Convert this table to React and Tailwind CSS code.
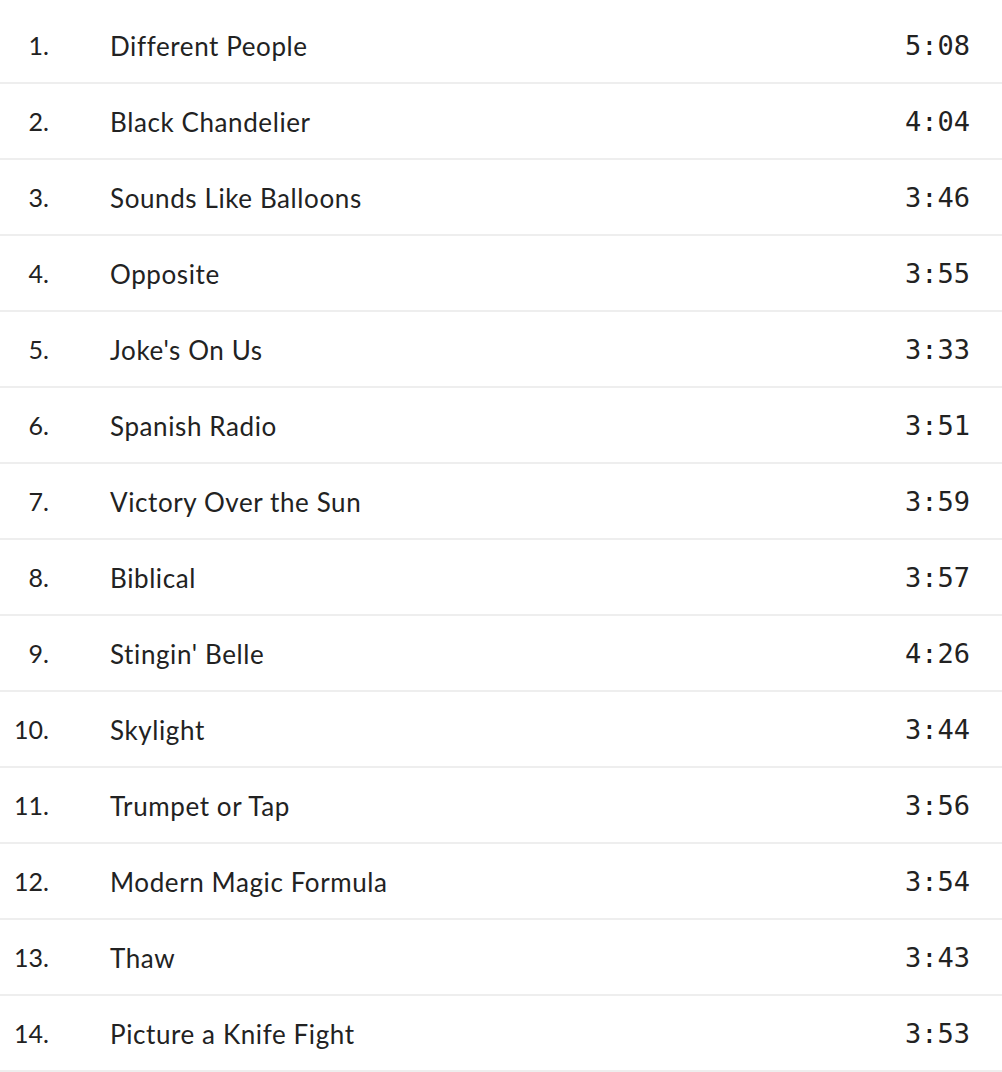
import React from 'react';

const tracks = [
  ['Different People', '5:08'],
  ['Black Chandelier', '4:04'],
  ['Sounds Like Balloons', '3:46'],
  ['Opposite', '3:55'],
  ["Joke's On Us", '3:33'],
  ['Spanish Radio', '3:51'],
  ['Victory Over the Sun', '3:59'],
  ['Biblical', '3:57'],
  ["Stingin' Belle", '4:26'],
  ['Skylight', '3:44'],
  ['Trumpet or Tap', '3:56'],
  ['Modern Magic Formula', '3:54'],
  ['Thaw', '3:43'],
  ['Picture a Knife Fight', '3:53'],
];

export default function App() {
  return (
    <div className="w-[1002px] bg-white pt-2 text-[#222] font-['Lato','Liberation_Sans',sans-serif]">
      <ol>
        {tracks.map(([title, time], i) => (
          <li key={i} className="flex h-[76px] items-center border-b-2 border-[#eeeeee] pr-8 pt-0.5">
            <span className="w-[49px] text-right text-[25px]">{i + 1}.</span>
            <span className="ml-[61px] flex-1 text-[26px] tracking-[0.6px]">{title}</span>
            <span className="font-['DejaVu_Sans_Mono',monospace] text-[27px]">{time}</span>
          </li>
        ))}
      </ol>
    </div>
  );
}
